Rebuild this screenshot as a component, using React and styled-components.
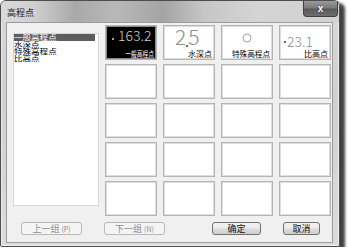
import React from 'react';
import styled, { createGlobalStyle } from 'styled-components';

const GlobalStyle = createGlobalStyle`
  body {
    margin: 0;
    background: #ffffff;
    font-family: "Noto Sans CJK SC", "Liberation Sans", sans-serif;
  }
`;

const Window = styled.div`
  width: 340px;
  height: 247px;
  box-sizing: border-box;
  border: 1px solid #4d4d4d;
  border-radius: 6px 6px 2px 2px;
  background: linear-gradient(180deg, #d9d9d9 0%, #d0d0d0 40%, #dcdcdc 100%);
  box-shadow: 5px 3px 3px rgba(0, 0, 0, 0.75), inset 0 0 0 1px rgba(255, 255, 255, 0.55);
  display: flex;
  flex-direction: column;
`;

const TitleBar = styled.div`
  height: 21px;
  display: flex;
  align-items: flex-start;
  padding-left: 6px;
  border-radius: 5px 5px 0 0;
  background: linear-gradient(90deg, #dadada 0%, #cfcfcf 10%, #a9a9a9 22%, #b9b9b9 34%, #a4a4a4 48%, #c6c6c6 60%, #d4d4d4 75%, #d2d2d2 100%);
`;

const Title = styled.div`
  margin-top: 7px;
  font-size: 9px;
  line-height: 9px;
  color: #1a1a1a;
`;

const CloseButton = styled.div`
  margin-left: auto;
  margin-right: 1px;
  width: 35px;
  height: 16px;
  box-sizing: border-box;
  border: 1px solid #3f3f3f;
  border-top: none;
  border-radius: 0 0 4px 4px;
  background: linear-gradient(180deg, #9a9a9a 0%, #7a7a7a 45%, #5a5a5a 55%, #6e6e6e 100%);
  display: flex;
  align-items: center;
  justify-content: center;
  color: #ffffff;
  font-family: "Liberation Sans", sans-serif;
  font-weight: bold;
  font-size: 10px;
  text-shadow: 0 0 2px #222;
`;

const Client = styled.div`
  flex: 1;
  margin: 0 6px 3px 5px;
  border: 1px solid #9c9c9c;
  background: #f0f0f0;
  display: flex;
  flex-direction: column;
`;

const MainRow = styled.div`
  display: flex;
  align-items: flex-start;
  padding-left: 6px;
`;

const ListBox = styled.div`
  margin-top: 10px;
  width: 86px;
  height: 173px;
  box-sizing: border-box;
  border: 1px solid #d6d6d6;
  background: #ffffff;
  padding-right: 3px;
`;

const ListItem = styled.div`
  height: 7px;
  font-size: 7px;
  line-height: 7px;
  background: ${(p) => (p.$selected ? '#5e5e5e' : 'transparent')};
`;

const ListText = styled.div`
  width: max-content;
  height: 7px;
  font-size: 7px;
  line-height: 7px;
  white-space: nowrap;
  color: ${(p) => (p.$selected ? '#ffffff' : '#000000')};
  transform: scaleX(1.22);
  transform-origin: left center;
`;

const Grid = styled.div`
  margin: 2px 0 0 6px;
  display: grid;
  grid-template-columns: repeat(4, 52px);
  grid-auto-rows: 35px;
  column-gap: 6px;
  row-gap: 4px;
`;

const Tile = styled.div`
  box-sizing: border-box;
  border: 1px solid #b4b4b4;
  box-shadow: inset 0 0 0 1px ${(p) => (p.$selected ? '#8a8a8a' : '#dedede')};
  background: ${(p) => (p.$selected ? '#000000' : '#ffffff')};
  display: flex;
  flex-direction: column;
`;

const Sample = styled.div`
  flex: 1;
  display: flex;
  align-items: flex-start;
  justify-content: ${(p) => (p.$center ? 'center' : 'flex-start')};
  padding: ${(p) => p.$pad};
  font-family: "Noto Sans CJK SC", "DejaVu Sans", sans-serif;
  font-weight: 200;
  font-size: ${(p) => p.$size}px;
  line-height: ${(p) => p.$lh || p.$size}px;
  color: ${(p) => (p.$selected ? '#cfcfcf' : '#8c8c8c')};
`;

const Dot = styled.span`
  display: inline-block;
  width: 2px;
  height: 2px;
  border-radius: 50%;
  background: ${(p) => (p.$light ? '#d8d8d8' : '#333333')};
  align-self: ${(p) => (p.$low ? 'flex-end' : 'center')};
  margin: ${(p) => p.$margin};
`;

const Label = styled.div`
  align-self: flex-end;
  font-size: 8px;
  line-height: 9px;
  height: 9px;
  margin: 0 2px 1px 0;
  white-space: nowrap;
  color: ${(p) => (p.$selected ? '#ffffff' : '#000000')};
  transform: scaleX(${(p) => p.$squeeze || 1});
  transform-origin: right center;
`;

const ButtonRow = styled.div`
  display: flex;
  margin-top: 6px;
  padding-left: 14px;
`;

const Button = styled.div`
  width: ${(p) => p.$w}px;
  height: 13px;
  margin-left: ${(p) => p.$gap || 0}px;
  box-sizing: border-box;
  border: 1px solid ${(p) => (p.$disabled ? '#b5b9bc' : '#707070')};
  border-radius: 3px;
  background: ${(p) =>
    p.$disabled
      ? '#f4f4f4'
      : 'linear-gradient(180deg, #f3f3f3 0%, #ebebeb 48%, #dcdcdc 52%, #cfcfcf 100%)'};
  display: flex;
  align-items: center;
  justify-content: center;
  font-size: 9px;
  color: ${(p) => (p.$disabled ? '#8a8a8a' : '#111111')};
  white-space: nowrap;
`;

const Paren = styled.span`
  font-size: 7px;
  margin-left: 2px;
`;

const items = ['一般高程点', '水深点', '特殊高程点', '比高点'];

const App = () => {
  const empty = Array(16).fill(0);
  return (
    <>
      <GlobalStyle />
      <Window>
        <TitleBar>
          <Title>高程点</Title>
          <CloseButton>x</CloseButton>
        </TitleBar>
        <Client>
          <MainRow>
            <ListBox>
              {items.map((item, i) => (
                <ListItem key={item} $selected={i === 0}>
                  <ListText $selected={i === 0}>{item}</ListText>
                </ListItem>
              ))}
            </ListBox>
            <Grid>
              <Tile $selected>
                <Sample $selected $size={14} $pad="2px 0 0 6px">
                  <Dot $light $margin="0 4px 0 0" />
                  163.2
                </Sample>
                <Label $selected $squeeze={0.72}>一般高程点</Label>
              </Tile>
              <Tile>
                <Sample $size={21} $lh={18} $pad="1px 0 0 11px">
                  2
                  <Dot $low $margin="0 0 2px 0" />
                  5
                </Sample>
                <Label>水深点</Label>
              </Tile>
              <Tile>
                <Sample $center $size={10} $pad="7px 0 0 0">
                  <svg width="10" height="10" viewBox="0 0 10 10">
                    <circle cx="5" cy="5" r="4" fill="none" stroke="#8c8c8c" strokeWidth="0.8" />
                  </svg>
                </Sample>
                <Label $squeeze={0.95}>特殊高程点</Label>
              </Tile>
              <Tile>
                <Sample $size={14} $pad="8px 0 0 4px">
                  <Dot $margin="0 1px 0 0" />
                  23.1
                </Sample>
                <Label>比高点</Label>
              </Tile>
              {empty.map((_, i) => (
                <Tile key={i} />
              ))}
            </Grid>
          </MainRow>
          <ButtonRow>
            <Button $w={61} $disabled>
              上一组<Paren>(P)</Paren>
            </Button>
            <Button $w={61} $gap={22} $disabled>
              下一组<Paren>(N)</Paren>
            </Button>
            <Button $w={49} $gap={47}>
              确定
            </Button>
            <Button $w={37} $gap={22}>
              取消
            </Button>
          </ButtonRow>
        </Client>
      </Window>
    </>
  );
};

export default App;
